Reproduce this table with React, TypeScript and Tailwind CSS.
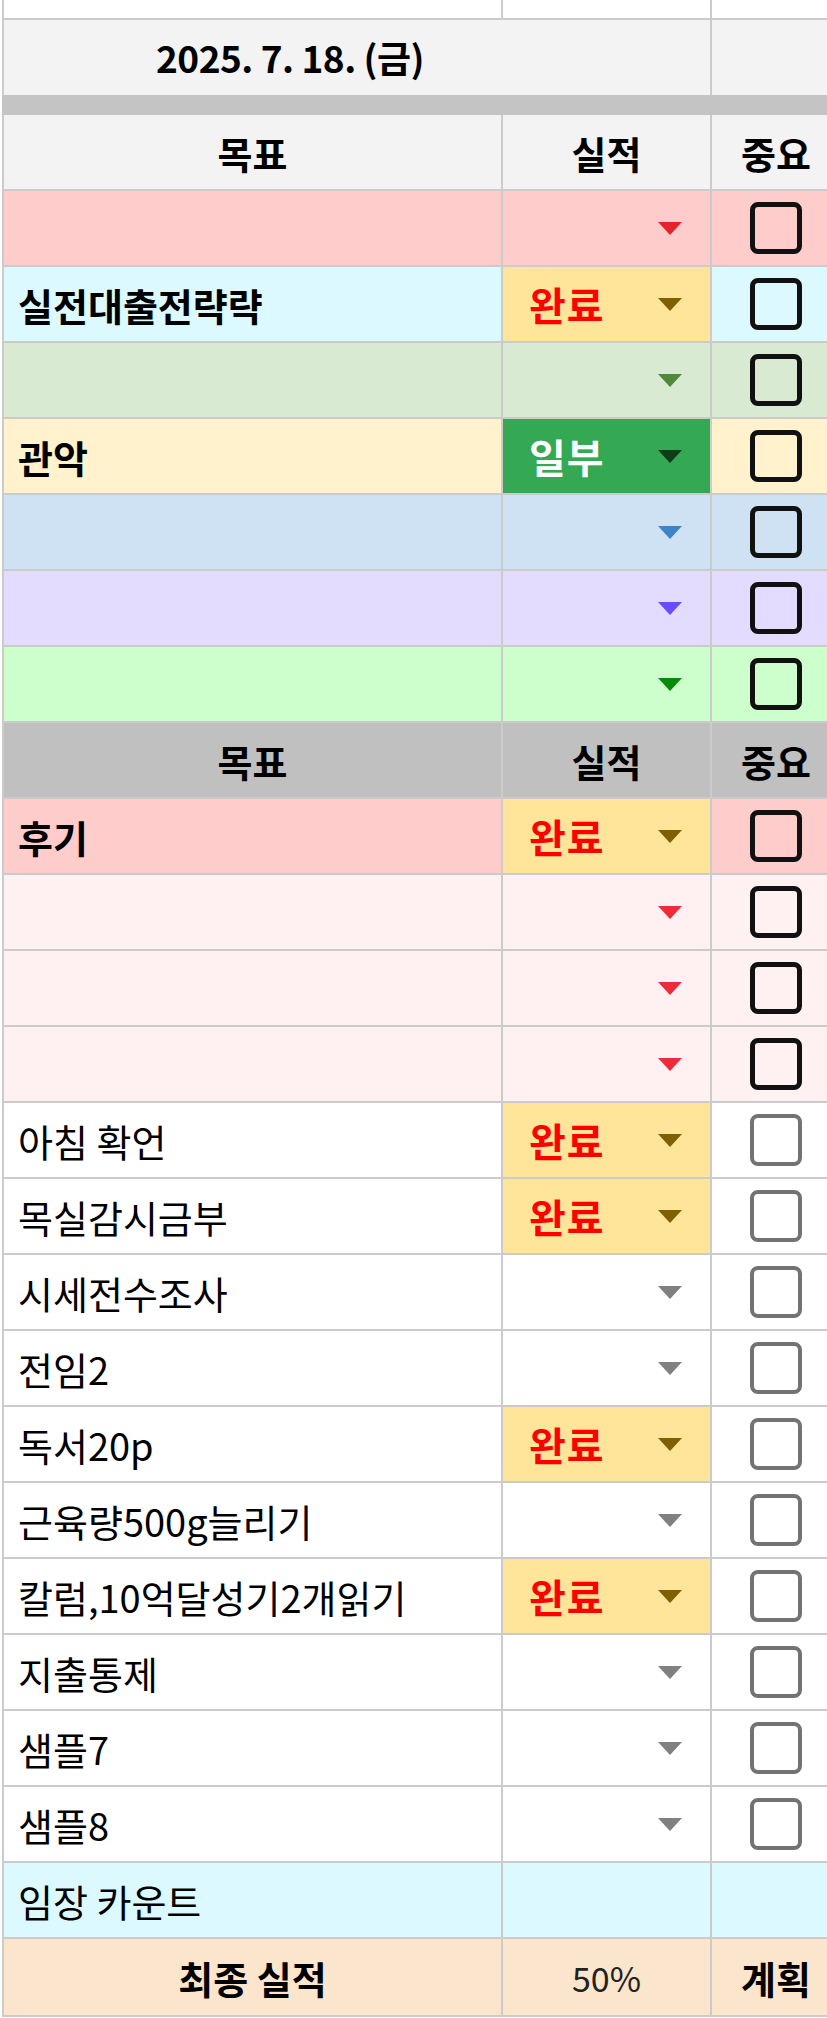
const rowLine = 'border-b-2 border-[#cbcbcb]';

type Goal = {
  text: string;
  bg: string;
  arrow: string;
  status?: 'done' | 'part';
  dark?: boolean;
  bold?: boolean;
};

const topGoals: Goal[] = [
  { text: '', bg: 'bg-[#ffcccc]', arrow: 'text-[#e8222a]', dark: true },
  { text: '실전대출전략략', bg: 'bg-[#dbf9ff]', arrow: 'text-[#7f6000]', status: 'done', dark: true, bold: true },
  { text: '', bg: 'bg-[#d9ead3]', arrow: 'text-[#4f8a3c]', dark: true },
  { text: '관악', bg: 'bg-[#fff2cc]', arrow: 'text-[#0f3b1c]', status: 'part', dark: true, bold: true },
  { text: '', bg: 'bg-[#cfe2f3]', arrow: 'text-[#3d85c6]', dark: true },
  { text: '', bg: 'bg-[#e4dcfe]', arrow: 'text-[#6a4cff]', dark: true },
  { text: '', bg: 'bg-[#ccffcc]', arrow: 'text-[#078a07]', dark: true },
];

const bottomGoals: Goal[] = [
  { text: '후기', bg: 'bg-[#ffcccc]', arrow: 'text-[#7f6000]', status: 'done', dark: true, bold: true },
  { text: '', bg: 'bg-[#fff1f1]', arrow: 'text-[#ee2b3b]', dark: true },
  { text: '', bg: 'bg-[#fff1f1]', arrow: 'text-[#ee2b3b]', dark: true },
  { text: '', bg: 'bg-[#fff1f1]', arrow: 'text-[#ee2b3b]', dark: true },
  { text: '아침 확언', bg: 'bg-white', arrow: 'text-[#7f6000]', status: 'done' },
  { text: '목실감시금부', bg: 'bg-white', arrow: 'text-[#7f6000]', status: 'done' },
  { text: '시세전수조사', bg: 'bg-white', arrow: 'text-[#808080]' },
  { text: '전임2', bg: 'bg-white', arrow: 'text-[#808080]' },
  { text: '독서20p', bg: 'bg-white', arrow: 'text-[#7f6000]', status: 'done' },
  { text: '근육량500g늘리기', bg: 'bg-white', arrow: 'text-[#808080]' },
  { text: '칼럼,10억달성기2개읽기', bg: 'bg-white', arrow: 'text-[#7f6000]', status: 'done' },
  { text: '지출통제', bg: 'bg-white', arrow: 'text-[#808080]' },
  { text: '샘플7', bg: 'bg-white', arrow: 'text-[#808080]' },
  { text: '샘플8', bg: 'bg-white', arrow: 'text-[#808080]' },
];

function Arrow({ color }: { color: string }) {
  return (
    <svg width="24" height="13" viewBox="0 0 24 13" className={color}>
      <polygon points="0,0 24,0 12,13" fill="currentColor" />
    </svg>
  );
}

function CheckBox({ dark }: { dark?: boolean }) {
  return (
    <div
      className={
        dark
          ? 'w-[52px] h-[52px] rounded-[8px] border-[5px] border-[#111111]'
          : 'w-[52px] h-[52px] rounded-[8px] border-[4px] border-[#737373]'
      }
    />
  );
}

function GoalRow({ goal }: { goal: Goal }) {
  let chip = '';
  if (goal.status === 'done') chip = 'bg-[#ffe599]';
  if (goal.status === 'part') chip = 'bg-[#34a853]';
  return (
    <div className={`flex h-[76px] ${rowLine} ${goal.bg}`}>
      <div
        className={`w-[501px] flex items-center pl-[14px] border-x-2 border-[#cbcbcb] text-[38px] text-black whitespace-nowrap ${
          goal.bold ? 'font-bold' : ''
        }`}
      >
        {goal.text}
      </div>
      <div
        className={`w-[209px] flex items-center justify-between pl-[26px] pr-[28px] border-r-2 border-[#cbcbcb] ${chip}`}
      >
        <span
          className={`text-[40px] font-bold tracking-[1px] ${
            goal.status === 'part' ? 'text-white' : 'text-[#ff0000]'
          }`}
        >
          {goal.status === 'done' ? '완료' : goal.status === 'part' ? '일부' : ''}
        </span>
        <Arrow color={goal.arrow} />
      </div>
      <div className="w-[130px] flex items-center justify-center border-r-2 border-[#cbcbcb]">
        <CheckBox dark={goal.dark} />
      </div>
    </div>
  );
}

function HeaderRow({ bg }: { bg: string }) {
  return (
    <div className={`flex h-[76px] ${rowLine} ${bg} text-[38px] font-bold text-black`}>
      <div className="w-[501px] flex items-center justify-center border-x-2 border-[#cbcbcb]">목표</div>
      <div className="w-[209px] flex items-center justify-center border-r-2 border-[#cbcbcb]">실적</div>
      <div className="w-[130px] flex items-center justify-center border-r-2 border-[#cbcbcb]">중요</div>
    </div>
  );
}

export default function App() {
  return (
    <div className="w-[827px] h-[2018px] overflow-hidden bg-white font-['Noto_Sans_CJK_KR','Noto_Sans',sans-serif]">
      <div className="w-[842px] pl-[2px]">
        {/* row cut off at the top */}
        <div className={`flex h-[20px] ${rowLine} bg-white`}>
          <div className="w-[501px] border-x-2 border-[#cbcbcb]" />
          <div className="w-[209px] border-r-2 border-[#cbcbcb]" />
          <div className="w-[130px] border-r-2 border-[#cbcbcb]" />
        </div>

        <div className="flex h-[75px] bg-[#f3f3f3]">
          <div className="w-[710px] flex items-center pl-[152px] border-x-2 border-[#cbcbcb] text-[37px] font-semibold tracking-[-0.5px] text-black">
            2025. 7. 18. (금)
          </div>
          <div className="w-[130px] border-r-2 border-[#cbcbcb]" />
        </div>
        <div className="h-[20px] bg-[#c4c4c4]" />

        <HeaderRow bg="bg-[#f3f3f3]" />
        {topGoals.map((g, i) => (
          <GoalRow key={i} goal={g} />
        ))}

        <HeaderRow bg="bg-[#c0c0c0]" />
        {bottomGoals.map((g, i) => (
          <GoalRow key={i} goal={g} />
        ))}

        <div className={`flex h-[76px] ${rowLine} bg-[#dbf9ff]`}>
          <div className="w-[501px] flex items-center pl-[14px] border-x-2 border-[#cbcbcb] text-[38px] text-black">
            임장 카운트
          </div>
          <div className="w-[209px] border-r-2 border-[#cbcbcb]" />
          <div className="w-[130px] border-r-2 border-[#cbcbcb]" />
        </div>

        <div className={`flex h-[78px] ${rowLine} bg-[#fce5cd] text-black`}>
          <div className="w-[501px] flex items-center justify-center border-x-2 border-[#cbcbcb] text-[38px] font-bold">
            최종 실적
          </div>
          <div className="w-[209px] flex items-center justify-center border-r-2 border-[#cbcbcb] text-[34px] text-[#222222]">
            50%
          </div>
          <div className="w-[130px] flex items-center justify-center border-r-2 border-[#cbcbcb] text-[38px] font-bold">
            계획
          </div>
        </div>
      </div>
    </div>
  );
}
